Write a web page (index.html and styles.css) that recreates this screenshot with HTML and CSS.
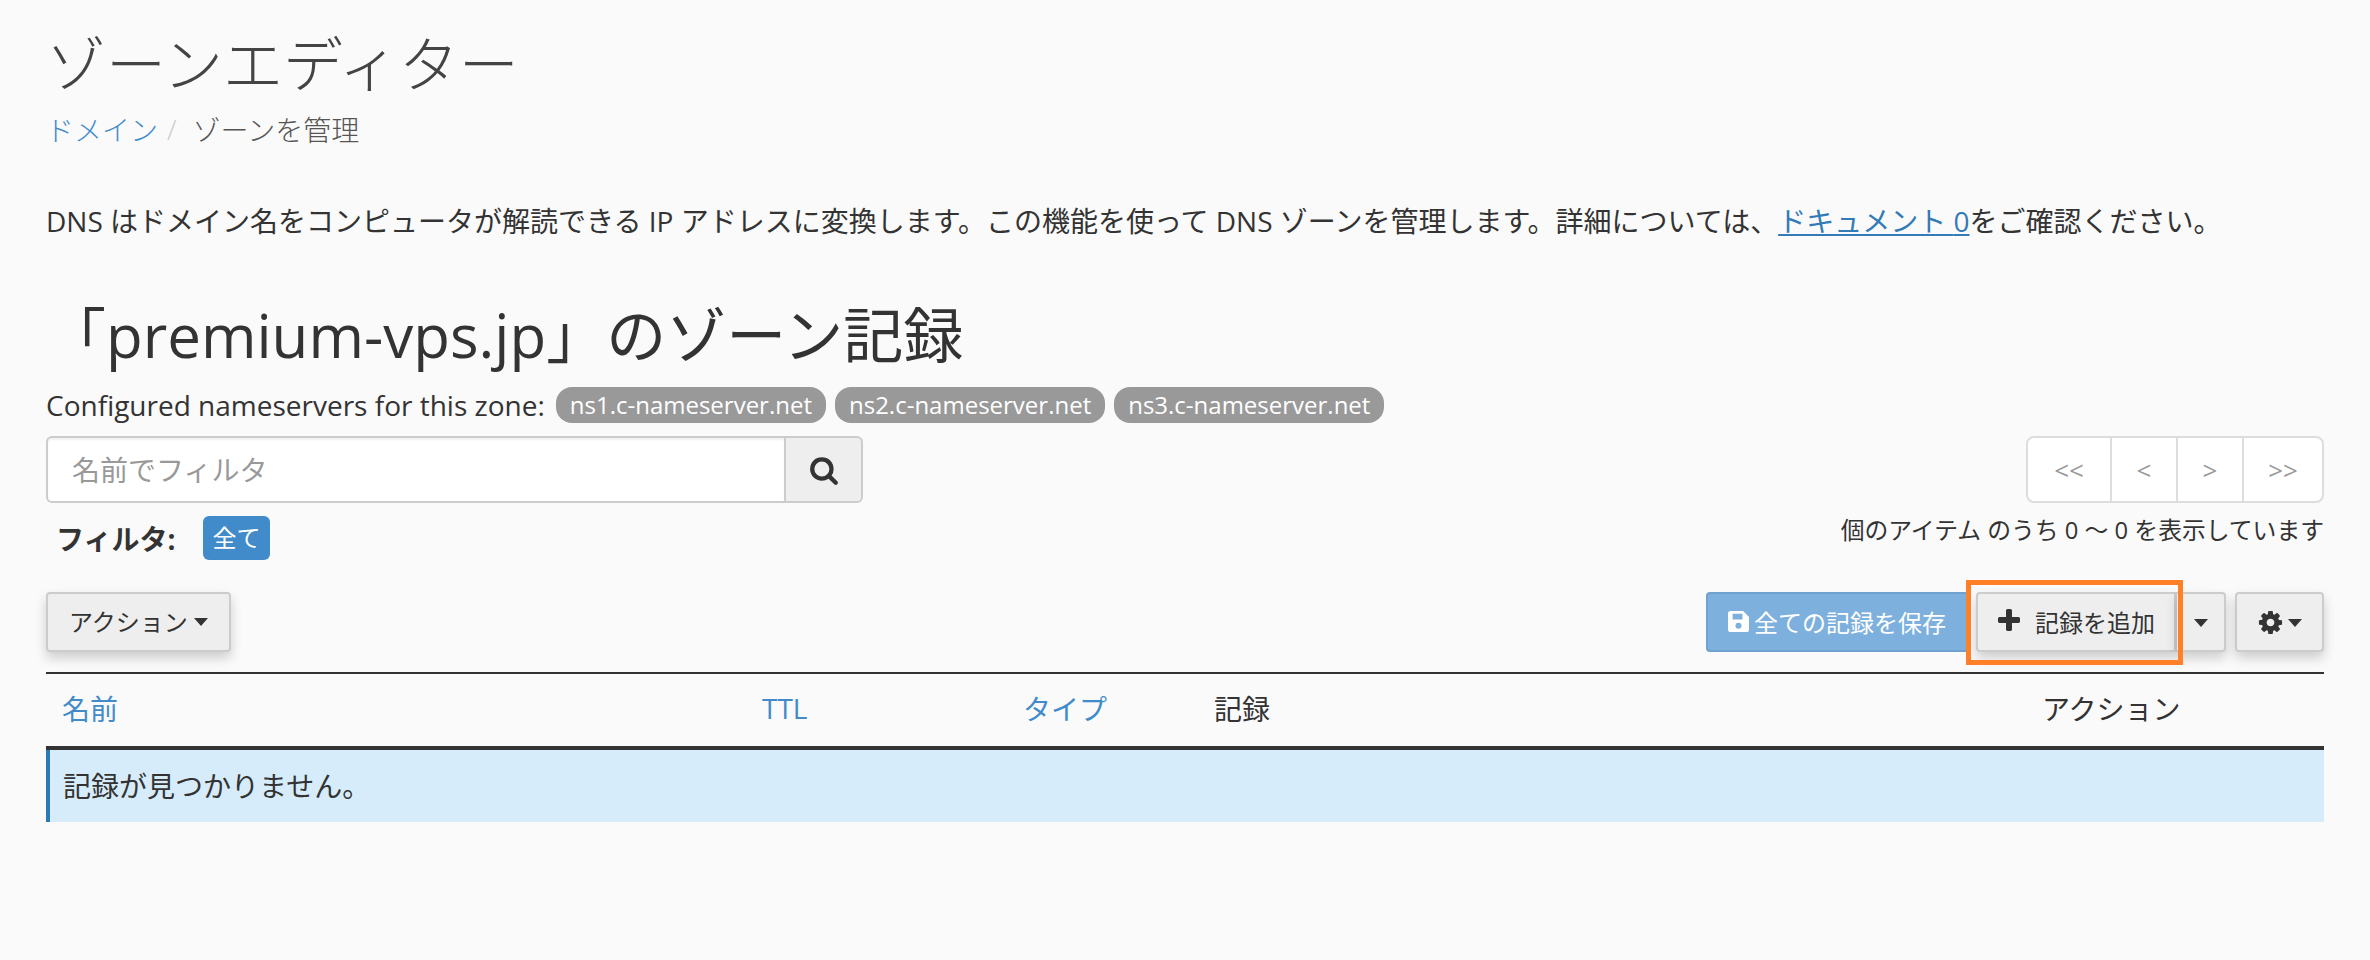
FILE: index.html
```html
<!DOCTYPE html>
<html lang="ja">
<head>
<meta charset="utf-8">
<title>ゾーンエディター</title>
<link rel="stylesheet" href="styles.css">
</head>
<body>
<main class="page">
  <h1 class="title">ゾーンエディター</h1>
  <nav class="crumbs"><a class="crumb-link">ドメイン</a><span class="crumb-sep">/</span><span class="crumb-cur">ゾーンを管理</span></nav>
  <p class="desc">DNS はドメイン名をコンピュータが解読できる IP アドレスに変換します。この機能を使って DNS ゾーンを管理します。詳細については、<a class="doc-link">ドキュメント <span class="doc-icon">0</span></a>をご確認ください。</p>
  <h2 class="zone-title">「premium-vps.jp」のゾーン記録</h2>
  <div class="ns-row">
    <span class="ns-label">Configured nameservers for this zone:</span>
    <span class="pill">ns1.c-nameserver.net</span>
    <span class="pill">ns2.c-nameserver.net</span>
    <span class="pill">ns3.c-nameserver.net</span>
  </div>
  <div class="filter-row">
    <div class="filter-left">
      <div class="search">
        <input class="search-input" type="text" placeholder="名前でフィルタ">
        <button class="search-btn" type="button"><svg class="ic-search" viewBox="0 0 1792 1792"><path d="M1216 832q0-185-131.500-316.500t-316.500-131.500-316.500 131.500-131.500 316.500 131.500 316.500 316.500 131.500 316.500-131.500 131.500-316.500zm512 832q0 52-38 90t-90 38q-54 0-90-38l-343-342q-179 124-399 124-143 0-273.500-55.500t-225-150-150-225-55.500-273.500 55.500-273.500 150-225 225-150 273.500-55.500 273.500 55.500 225 150 150 225 55.500 273.500q0 220-124 399l343 343q37 37 37 90z"/></svg></button>
      </div>
      <div class="filters"><strong class="filter-label">フィルタ:</strong><span class="badge">全て</span></div>
    </div>
    <div class="filter-right">
      <div class="pager"><span class="page-btn">&lt;&lt;</span><span class="page-btn">&lt;</span><span class="page-btn">&gt;</span><span class="page-btn">&gt;&gt;</span></div>
      <div class="count">個のアイテム のうち 0 ～ 0 を表示しています</div>
    </div>
  </div>
  <div class="toolbar">
    <button class="btn btn-action" type="button">アクション<i class="caret"></i></button>
    <div class="tools">
      <button class="btn-save" type="button"><svg class="ic-save" viewBox="0 0 16 16"><path d="M2 0h9.500L16 4.500V14a2 2 0 0 1-2 2H2a2 2 0 0 1-2-2V2a2 2 0 0 1 2-2zM3.500 2v4.500h7.500V2zM8 9a2.300 2.300 0 1 0 0 4.600A2.300 2.300 0 0 0 8 9z" fill-rule="evenodd"/></svg>全ての記録を保存</button>
      <div class="split">
        <button class="btn btn-add" type="button"><svg class="ic-plus" viewBox="0 0 1792 1792"><path d="M1600 736v192q0 40-28 68t-68 28h-416v416q0 40-28 68t-68 28h-192q-40 0-68-28t-28-68v-416h-416q-40 0-68-28t-28-68v-192q0-40 28-68t68-28h416v-416q0-40 28-68t68-28h192q40 0 68 28t28 68v416h416q40 0 68 28t28 68z"/></svg>記録を追加</button>
        <button class="btn btn-drop" type="button"><i class="caret"></i></button>
        <span class="highlight"></span>
      </div>
      <button class="btn btn-gear" type="button"><svg class="ic-cog" viewBox="0 0 1792 1792"><path d="M1152 896q0-106-75-181t-181-75-181 75-75 181 75 181 181 75 181-75 75-181zm512-109v222q0 12-8 23t-20 13l-185 28q-19 54-39 91 35 50 107 138 10 12 10 25t-9 23q-27 37-99 108t-94 71q-12 0-26-9l-138-108q-44 23-91 38-16 136-29 186-7 28-36 28h-222q-14 0-24.500-8.500t-11.500-21.500l-28-184q-49-16-90-37l-141 107q-10 9-25 9-14 0-25-11-126-114-165-168-7-10-7-23 0-12 8-23 15-21 51-66.500t54-70.500q-27-50-41-99l-183-27q-13-2-21-12.500t-8-23.500v-222q0-12 8-23t19-13l186-28q14-46 39-92-40-57-107-138-10-12-10-24 0-10 9-23 26-36 98.500-107.500t94.500-71.500q13 0 26 10l138 107q44-23 91-38 16-136 29-186 7-28 36-28h222q14 0 24.500 8.500t11.500 21.500l28 184q49 16 90 37l142-107q9-9 24-9 13 0 25 10 129 119 165 170 7 8 7 22 0 12-8 23-15 21-51 66.500t-54 70.500q26 50 41 98l183 28q13 2 21 12.500t8 23.500z"/></svg><i class="caret"></i></button>
    </div>
  </div>
  <div class="thead">
    <a class="th th-name">名前</a>
    <a class="th th-ttl">TTL</a>
    <a class="th th-type">タイプ</a>
    <span class="th th-rec">記録</span>
    <span class="th th-act">アクション</span>
  </div>
  <div class="empty">記録が見つかりません。</div>
</main>
</body>
</html>
```
FILE: styles.css
```css
* { box-sizing: border-box; }
html, body { margin: 0; padding: 0; }
body {
  background: #fafafa;
  color: #333;
  font-family: "Open Sans", "Noto Sans CJK JP", sans-serif;
  font-size: 28px;
  min-height: 960px;
}
.page { padding: 0 46px; }
.title {
  margin: 0;
  padding-top: 28px;
  font-size: 60px;
  line-height: 72px;
  font-weight: 200;
  color: #444;
}
.crumbs {
  display: flex;
  align-items: center;
  height: 36px;
  margin-top: 11px;
  font-weight: 200;
}
.crumb-link { color: #428bca; }
.crumb-sep { color: #ccc; margin: 0 16px 0 9px; }
.crumb-cur { color: #555; }
.desc { margin: 56px 0 0; line-height: 36px; height: 36px; white-space: nowrap; }
.doc-link { color: #337ab7; text-decoration: underline; }
.zone-title {
  margin: 60px 0 0;
  font-size: 60px;
  line-height: 72px;
  font-weight: 400;
  white-space: nowrap;
}
.ns-row { display: flex; align-items: center; gap: 9px; height: 36px; margin-top: 16px; }
.ns-label { margin-right: 2px; }
.pill {
  background: #999;
  color: #fff;
  border-radius: 16px;
  height: 36px;
  line-height: 36px;
  padding: 0 14px;
  font-size: 24px;
}
.filter-row { display: flex; justify-content: space-between; margin-top: 13px; }
.search { display: flex; width: 817px; height: 67px; }
.search-input {
  flex: 1;
  min-width: 0;
  background: #fff;
  border: 2px solid #ccc;
  border-right: 0;
  border-radius: 6px 0 0 6px;
  padding: 0 24px;
  font: inherit;
  color: #333;
  box-shadow: inset 0 2px 2px rgba(0,0,0,.06);
}
.search-input::placeholder { color: #999; opacity: 1; }
.search-btn {
  width: 79px;
  background: #eee;
  border: 2px solid #ccc;
  border-radius: 0 6px 6px 0;
  display: flex;
  align-items: center;
  justify-content: center;
  padding: 0;
}
.ic-search { width: 30px; height: 30px; fill: #333; }
.filters { display: flex; align-items: center; height: 44px; margin-top: 13px; padding-left: 10px; }
.filter-label { width: 147px; font-weight: 700; }
.badge {
  background: #428bca;
  color: #fff;
  border-radius: 6px;
  width: 67px;
  height: 44px;
  line-height: 44px;
  text-align: center;
  font-size: 24px;
}
.filter-right { display: flex; flex-direction: column; align-items: flex-end; }
.pager {
  display: flex;
  height: 67px;
  background: #fff;
  border: 2px solid #ddd;
  border-radius: 8px;
}
.page-btn {
  width: 66px;
  display: flex;
  align-items: center;
  justify-content: center;
  color: #999;
  font-size: 26px;
  border-left: 2px solid #ddd;
}
.page-btn:first-child { border-left: 0; width: 82px; }
.page-btn:last-child { width: 80px; }
.count { margin-top: 10px; font-size: 23.800px; line-height: 34px; }
.toolbar { display: flex; justify-content: space-between; align-items: flex-start; margin-top: 32px; }
.tools { display: flex; }
.btn {
  display: flex;
  align-items: center;
  justify-content: center;
  height: 60px;
  background: #eee;
  color: #333;
  border: 2px solid #ccc;
  border-radius: 4px;
  font: inherit;
  font-size: 24px;
  padding: 0 20px 2px;
  box-shadow: 0 6px 12px rgba(0,0,0,.18);
}
.btn-action { padding: 0 21px 3px; }
.caret {
  display: inline-block;
  width: 0;
  height: 0;
  margin: 2px 0 0 6px;
  border-top: 8px solid #333;
  border-left: 7.500px solid transparent;
  border-right: 7.500px solid transparent;
}
.btn-save {
  display: flex;
  align-items: center;
  width: 262px;
  height: 60px;
  padding: 0 20px 2px;
  background: #7eb0dd;
  color: #fff;
  border: 2px solid #70a1cf;
  border-right: 0;
  border-radius: 4px 0 0 4px;
  font: inherit;
  font-size: 24px;
  white-space: nowrap;
}
.ic-save { width: 21px; height: 21px; fill: #fff; margin-right: 5px; flex: none; }
.split { display: flex; position: relative; margin-left: 8px; }
.btn-add { width: 201px; justify-content: flex-start; padding: 0 0 2px 17px; border-radius: 4px 0 0 4px; border-right-width: 3px; }
.btn-drop { width: 49px; padding: 0; border-left: 0; border-radius: 0 4px 4px 0; }
.btn-drop .caret { margin-left: 0; }
.ic-plus { width: 28px; height: 28px; fill: #333; margin-right: 12px; flex: none; }
.highlight {
  position: absolute;
  left: -10px;
  top: -12px;
  width: 217px;
  height: 85px;
  border: 5px solid #ff8026;
  pointer-events: none;
}
.btn-gear { width: 89px; margin-left: 9px; padding: 0; }
.ic-cog { width: 27px; height: 27px; fill: #333; }
.btn-gear .caret { margin-left: 4px; }
.thead {
  display: grid;
  grid-template-columns: 700px 261px 191px 828px 1fr;
  align-items: center;
  height: 78px;
  margin-top: 20px;
  border-top: 2px solid #333;
  border-bottom: 4px solid #333;
  padding: 0 0 5px 16px;
}
.th { color: #333; }
a.th { color: #428bca; }
.empty {
  background: #d7ecfa;
  border-left: 4px solid #2a7ab5;
  height: 72px;
  line-height: 72px;
  padding-left: 13px;
}
```
